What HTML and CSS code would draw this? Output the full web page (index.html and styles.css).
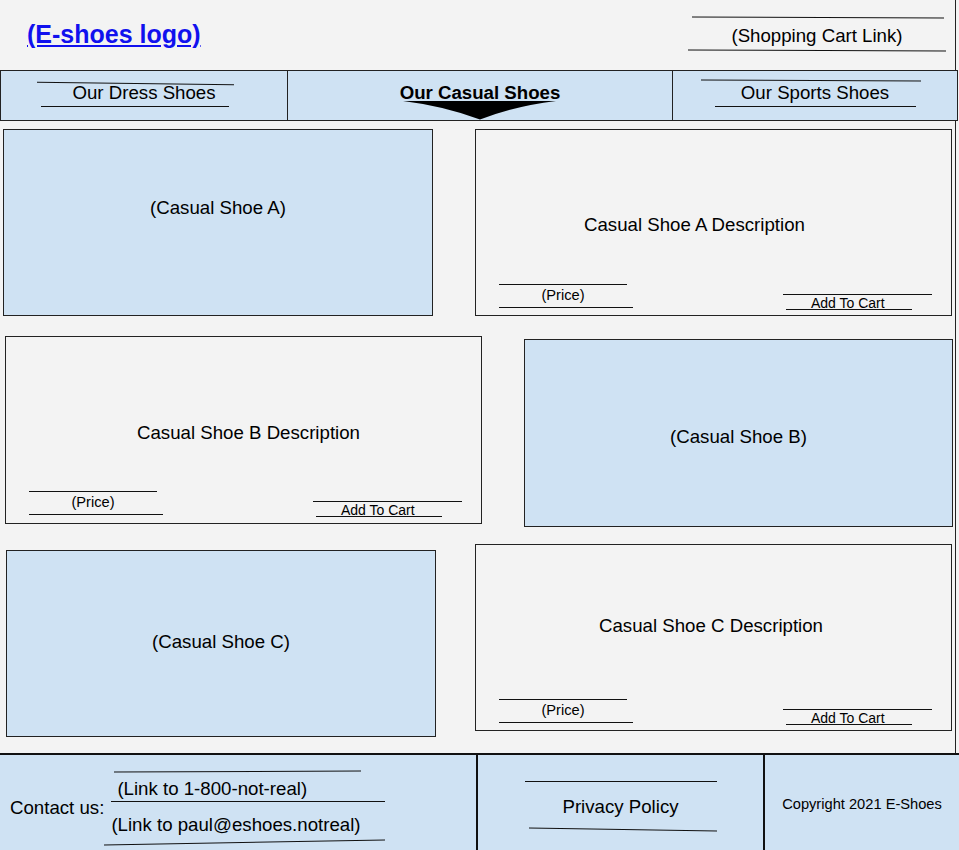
FILE: index.html
```html
<!DOCTYPE html>
<html>
<head>
<meta charset="utf-8">
<title>E-Shoes</title>
<link rel="stylesheet" href="styles.css">
</head>
<body>
<div class="page">
  <header class="top framed">
    <a class="logo" href="#">(E-shoes logo)</a>
    <div class="cart">
      <i class="ln cart-l1"></i>
      <a class="cart-t" href="#">(Shopping Cart Link)</a>
      <i class="ln cart-l2"></i>
    </div>
  </header>

  <nav class="nav">
    <div class="tab tab-dress">
      <i class="ln dress-l1"></i>
      <span class="tab-t">Our Dress Shoes</span>
      <i class="ln dress-l2"></i>
    </div>
    <div class="tab tab-casual">
      <span class="tab-t cur">Our Casual Shoes</span>
      <svg class="pointer" viewBox="0 0 153 19" width="153" height="19"><path d="M0 0 H153 Q112 5 77 18.5 Q41 5 0 0Z" fill="#000"/></svg>
    </div>
    <div class="tab tab-sports">
      <i class="ln sports-l1"></i>
      <span class="tab-t sports-t">Our Sports Shoes</span>
      <i class="ln sports-l2"></i>
    </div>
  </nav>

  <main class="main framed">
    <div class="row">
      <div class="pic pic-a">(Casual Shoe A)</div>
      <div class="desc desc-a">
        <p class="title">Casual Shoe A Description</p>
        <div class="buy">
          <div class="price"><i class="ln p1"></i><span class="price-t">(Price)</span><i class="ln p2"></i></div>
          <div class="add"><i class="ln a1"></i><span class="add-t">Add To Cart</span><i class="ln a2"></i></div>
        </div>
      </div>
    </div>

    <div class="row r2">
      <div class="desc desc-b">
        <p class="title">Casual Shoe B Description</p>
        <div class="buy">
          <div class="price"><i class="ln p1"></i><span class="price-t">(Price)</span><i class="ln p2"></i></div>
          <div class="add"><i class="ln a1"></i><span class="add-t">Add To Cart</span><i class="ln a2"></i></div>
        </div>
      </div>
      <div class="pic pic-b">(Casual Shoe B)</div>
    </div>

    <div class="row r3">
      <div class="pic pic-c">(Casual Shoe C)</div>
      <div class="desc desc-c">
        <p class="title">Casual Shoe C Description</p>
        <div class="buy">
          <div class="price"><i class="ln p1"></i><span class="price-t">(Price)</span><i class="ln p2"></i></div>
          <div class="add"><i class="ln a1"></i><span class="add-t">Add To Cart</span><i class="ln a2"></i></div>
        </div>
      </div>
    </div>
  </main>

  <footer class="foot">
    <div class="contact">
      <span class="contact-l">Contact us:</span>
      <div class="links">
        <i class="ln c1"></i>
        <a class="link-t t1" href="#">(Link to 1-800-not-real)</a>
        <i class="ln c2"></i>
        <a class="link-t t2" href="#">(Link to paul@eshoes.notreal)</a>
        <i class="ln c3"></i>
      </div>
    </div>
    <div class="privacy">
      <i class="ln v1"></i>
      <a class="priv-t" href="#">Privacy Policy</a>
      <i class="ln v2"></i>
    </div>
    <div class="copy">Copyright 2021 E-Shoes</div>
  </footer>
</div>
</body>
</html>
```

FILE: styles.css
```css
* { box-sizing: border-box; }
html, body { margin: 0; }
body {
  background: #f3f3f3;
  font-family: "Liberation Sans", Arial, sans-serif;
  font-size: 18.67px;
  color: #000;
}
.page {
  width: 959px;
  height: 850px;
  overflow: hidden;
  display: flex;
  flex-direction: column;
}
.framed { width: 956px; border-right: 1px solid #222; }

.ln { display: block; height: 1px; background: #111; flex-shrink: 0; }

/* header */
.top {
  height: 70px;
  flex-shrink: 0;
  display: flex;
  justify-content: space-between;
  align-items: flex-start;
}
.logo {
  margin: 20px 0 0 27px;
  font-size: 25px;
  line-height: 29px;
  font-weight: bold;
  color: #1111ee;
  text-decoration: underline;
}
.cart {
  width: 258px;
  margin: 17px 9px 0 0;
  display: flex;
  flex-direction: column;
  align-items: flex-start;
}
.cart-l1 { width: 252px; margin-left: 4px; transform: rotate(0.23deg); }
.cart-t {
  align-self: stretch;
  text-align: center;
  line-height: 22px;
  margin-top: 7px;
  color: #000;
  text-decoration: none;
}
.cart-l2 { width: 258px; margin-top: 3px; transform: rotate(0.22deg); }

/* nav */
.nav {
  width: 958px;
  height: 51px;
  flex-shrink: 0;
  display: flex;
  border: 1px solid #222;
  background: #cfe2f3;
}
.tab { display: flex; flex-direction: column; align-items: flex-start; }
.tab-dress { width: 286px; }
.tab-casual { width: 385px; border-left: 1px solid #222; position: relative; }
.tab-sports { width: 285px; border-left: 1px solid #222; }
.tab-t { align-self: stretch; text-align: center; line-height: 18px; }
.dress-l1 { width: 197px; margin: 12px 0 0 36px; transform: rotate(0.7deg); }
.dress-l2 { width: 188px; margin: 4px 0 0 40px; }
.cur { margin-top: 13px; font-weight: bold; }
.pointer { position: absolute; left: 115px; top: 30px; }
.sports-l1 { width: 220px; margin: 9px 0 0 28px; transform: rotate(0.26deg); }
.sports-t { margin-top: 3px; }
.sports-l2 { width: 201px; margin: 4px 0 0 42px; }

/* main */
.main {
  flex: 1;
  padding-top: 8px;
  display: flex;
  flex-direction: column;
}
.row { display: flex; align-items: flex-start; }
.r2 { margin-top: 20px; }
.r3 { margin-top: 17px; }

.pic {
  background: #cfe2f3;
  border: 1px solid #222;
  display: flex;
  align-items: center;
  justify-content: center;
  line-height: 22px;
  flex-shrink: 0;
}
.pic-a { width: 430px; height: 187px; margin-left: 3px; padding-bottom: 30px; }
.pic-b { width: 429px; height: 188px; margin: 3px 0 0 42px; padding-top: 7px; }
.pic-c { width: 430px; height: 187px; margin: 6px 0 0 6px; padding-bottom: 4px; }

.desc {
  width: 477px;
  border: 1px solid #222;
  display: flex;
  flex-direction: column;
  flex-shrink: 0;
}
.desc-a { height: 187px; margin-left: 42px; padding-bottom: 5px; }
.desc-b { height: 188px; margin-left: 5px; padding-bottom: 6px; }
.desc-c { height: 187px; margin-left: 39px; padding-bottom: 5px; }
.title { margin: 0; line-height: 22px; white-space: nowrap; }
.desc-a .title { margin: 84px 0 0 108px; }
.desc-b .title { margin: 85px 0 0 131px; }
.desc-c .title { margin: 70px 0 0 123px; }

.buy { margin-top: auto; height: 26px; display: flex; align-items: flex-start; }
.price {
  width: 134px;
  margin-left: 23px;
  display: flex;
  flex-direction: column;
  align-items: flex-start;
}
.p1 { width: 128px; }
.price-t {
  width: 128px;
  text-align: center;
  font-size: 14.67px;
  line-height: 17px;
  margin-top: 2px;
}
.p2 { width: 134px; margin-top: 3px; }
.add {
  width: 149px;
  margin-left: 150px;
  display: flex;
  flex-direction: column;
  align-items: flex-start;
}
.a1 { width: 149px; margin-top: 10px; }
.add-t { font-size: 14px; line-height: 16px; margin: 0 0 0 28px; white-space: nowrap; }
.a2 { width: 126px; margin: -2px 0 0 3px; }

/* footer */
.foot {
  height: 97px;
  flex-shrink: 0;
  width: 959px;
  border-top: 2px solid #111;
  background: #cfe2f3;
  display: flex;
}
.contact { width: 476px; display: flex; align-items: flex-start; }
.contact-l { margin: 42px 0 0 10px; line-height: 22px; white-space: nowrap; }
.links { display: flex; flex-direction: column; align-items: flex-start; }
.link-t { line-height: 22px; color: #000; text-decoration: none; white-space: nowrap; }
.c1 { width: 247px; margin: 16px 0 0 10px; transform: rotate(-0.23deg); }
.t1 { margin: 6px 0 0 13px; }
.c2 { width: 274px; margin: 1px 0 0 7px; }
.t2 { margin: 12px 0 0 7px; }
.c3 { width: 281px; margin-top: 6px; transform: rotate(-1deg); }

.privacy {
  width: 289px;
  border-left: 2px solid #111;
  border-right: 2px solid #111;
  display: flex;
  flex-direction: column;
  align-items: flex-start;
}
.v1 { width: 192px; margin: 26px 0 0 47px; }
.priv-t {
  align-self: stretch;
  text-align: center;
  line-height: 22px;
  margin-top: 14px;
  color: #000;
  text-decoration: none;
}
.v2 { width: 188px; margin: 11px 0 0 51px; transform: rotate(0.9deg); }

.copy {
  flex: 1;
  text-align: center;
  font-size: 14.67px;
  line-height: 17px;
  padding-top: 41px;
}
```
